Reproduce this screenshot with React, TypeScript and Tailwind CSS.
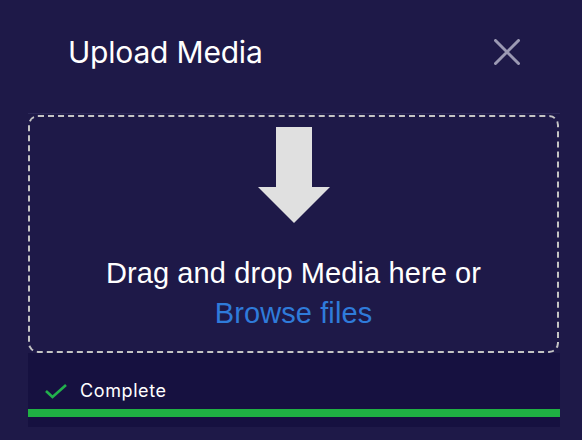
import React from "react";

const DownArrow = () => (
  <svg width="72" height="96" viewBox="0 0 72 96" className="block">
    <polygon points="18,0 54,0 54,60 72,60 36,96 0,60 18,60" fill="#e0e0e0" />
  </svg>
);

const CloseIcon = () => (
  <svg width="26" height="26" viewBox="0 0 26 26" className="block">
    <path
      d="M1.5 1.5 L24.5 24.5 M24.5 1.5 L1.5 24.5"
      stroke="#9b99b3"
      strokeWidth="3"
      strokeLinecap="round"
      fill="none"
    />
  </svg>
);

const CheckIcon = () => (
  <svg width="22" height="15" viewBox="0 0 22 15" className="block">
    <polyline
      points="1,7 7.5,13 21,1"
      stroke="#22b14c"
      strokeWidth="2.6"
      fill="none"
    />
  </svg>
);

export default function App() {
  return (
    <div className="w-[582px] h-[440px] bg-[#1e1948] pl-[28px] pr-[22px] overflow-hidden">
      {/* header */}
      <div className="h-[104px] flex items-center justify-between px-[40px]">
        <h1 className="text-[30px] leading-[36px] text-white font-['Inter',sans-serif] tracking-[-0.2px]">
          Upload Media
        </h1>
        <button className="cursor-pointer">
          <CloseIcon />
        </button>
      </div>

      <div className="mt-[9px] h-px bg-[#2c2858]" />

      {/* drop zone */}
      <div className="mt-px h-[238px] w-[531px] border-2 border-dashed border-[#c4c4c4] rounded-[10px] flex flex-col items-center pt-[10px]">
        <DownArrow />
        <p className="mt-[30px] text-center text-[29px] leading-[40px] text-white font-['Liberation_Sans',Arial,sans-serif] tracking-[0.1px]">
          Drag and drop Media here or
          <br />
          <span className="text-[#2f7bda] cursor-pointer">Browse files</span>
        </p>
      </div>

      {/* status */}
      <div className="h-[74px] bg-[#161140] pt-[26px] pb-[10px]">
        <div className="h-[24px] flex items-center pl-[17px] gap-[13px]">
          <CheckIcon />
          <span className="text-[18px] leading-[24px] text-white font-['Inter',sans-serif] tracking-[0.6px]">
            Complete
          </span>
        </div>
        <div className="mt-[6px] h-[8px] bg-[#1fb143]" />
      </div>
    </div>
  );
}
